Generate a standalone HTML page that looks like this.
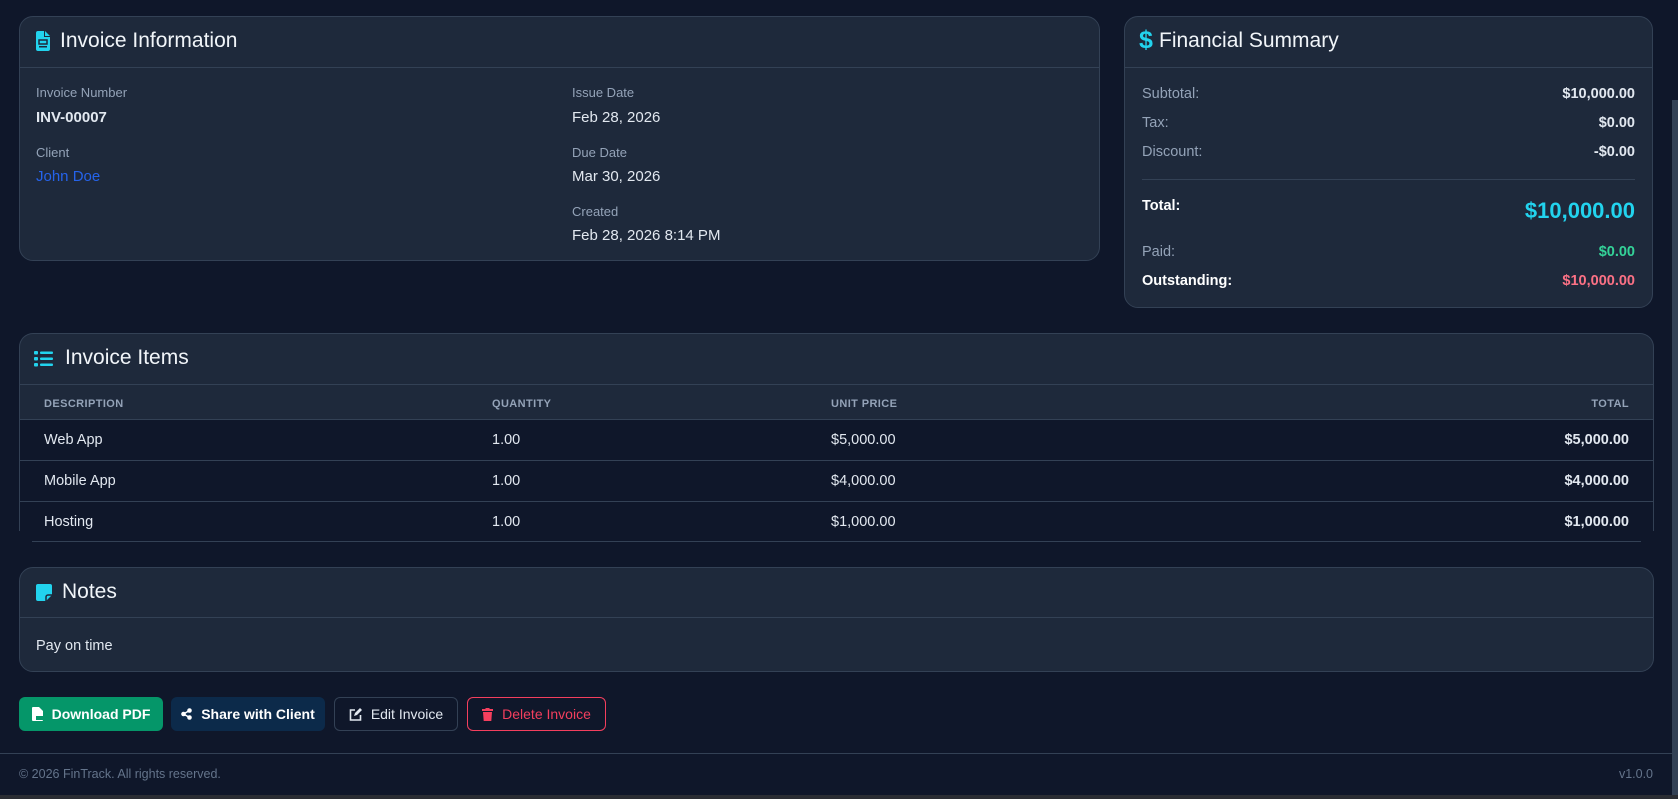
<!DOCTYPE html>
<html><head><meta charset="utf-8">
<style>
*{margin:0;padding:0;box-sizing:border-box}
body{width:1678px;height:799px;background:#0f172a;font-family:"Liberation Sans",sans-serif;color:#e2e8f0;position:relative;overflow:hidden}
.a{position:absolute;white-space:nowrap}
.card{position:absolute;background:#1e293b;border:1px solid #334155;border-radius:14px;overflow:hidden}
.hd{position:absolute;left:0;right:0;top:0;height:51px;border-bottom:1px solid #334155}
.ttl{position:absolute;top:12px;font-size:21px;color:#f1f5f9}
.lbl{font-size:13px;color:#94a3b8}
.val{font-size:15px;color:#e2e8f0}
.th{font-size:11px;font-weight:bold;color:#94a3b8;letter-spacing:.4px}
.td{font-size:14.5px;color:#e2e8f0}
.btn{position:absolute;top:697px;height:34px;border-radius:6px;font-size:14px;font-weight:bold;display:flex;align-items:center;justify-content:center;gap:9px}
</style></head><body>

<!-- Invoice Information -->
<div class="card" style="left:19px;top:16px;width:1081px;height:245px">
  <div class="hd"></div>
  <svg class="a" style="left:16px;top:14px" width="14" height="20" viewBox="0 0 14 20"><path d="M0 2a2 2 0 0 1 2-2h6v6h6v12a2 2 0 0 1-2 2H2a2 2 0 0 1-2-2z M9 0l5 5H9z" fill="#22d3ee"/><rect x="3" y="9" width="8" height="4" fill="none" stroke="#1e293b" stroke-width="1.5"/><rect x="3" y="15" width="8" height="1.5" fill="#1e293b"/></svg>
  <div class="ttl" style="left:40px">Invoice Information</div>
  <div class="a lbl" style="left:16px;top:68px">Invoice Number</div>
  <div class="a val" style="left:16px;top:92px;font-weight:bold">INV-00007</div>
  <div class="a lbl" style="left:16px;top:128px">Client</div>
  <div class="a val" style="left:16px;top:151px;color:#2563eb">John Doe</div>
  <div class="a lbl" style="left:552px;top:68px">Issue Date</div>
  <div class="a val" style="left:552px;top:92px">Feb 28, 2026</div>
  <div class="a lbl" style="left:552px;top:128px">Due Date</div>
  <div class="a val" style="left:552px;top:151px">Mar 30, 2026</div>
  <div class="a lbl" style="left:552px;top:187px">Created</div>
  <div class="a val" style="left:552px;top:210px">Feb 28, 2026 8:14 PM</div>
</div>

<!-- Financial Summary -->
<div class="card" style="left:1124px;top:16px;width:529px;height:292px">
  <div class="hd"></div>
  <div class="a" style="left:14px;top:9px;font-size:25px;font-weight:bold;color:#22d3ee">$</div>
  <div class="ttl" style="left:34px">Financial Summary</div>
  <div class="a" style="left:17px;top:69px;font-size:14.5px;color:#94a3b8">Subtotal:</div>
  <div class="a" style="right:17px;top:69px;font-size:14.5px;font-weight:bold;color:#e2e8f0">$10,000.00</div>
  <div class="a" style="left:17px;top:98px;font-size:14.5px;color:#94a3b8">Tax:</div>
  <div class="a" style="right:17px;top:98px;font-size:14.5px;font-weight:bold">$0.00</div>
  <div class="a" style="left:17px;top:127px;font-size:14.5px;color:#94a3b8">Discount:</div>
  <div class="a" style="right:17px;top:127px;font-size:14.5px;font-weight:bold">-$0.00</div>
  <div class="a" style="left:17px;right:17px;top:162px;height:1px;background:#334155"></div>
  <div class="a" style="left:17px;top:181px;font-size:14.5px;font-weight:bold;color:#fff">Total:</div>
  <div class="a" style="right:17px;top:181px;font-size:22px;font-weight:bold;color:#22d3ee">$10,000.00</div>
  <div class="a" style="left:17px;top:227px;font-size:14.5px;color:#94a3b8">Paid:</div>
  <div class="a" style="right:17px;top:227px;font-size:14.5px;font-weight:bold;color:#34d399">$0.00</div>
  <div class="a" style="left:17px;top:256px;font-size:14.5px;font-weight:bold;color:#fff">Outstanding:</div>
  <div class="a" style="right:17px;top:256px;font-size:14.5px;font-weight:bold;color:#fb7185">$10,000.00</div>
</div>

<!-- Invoice Items -->
<div class="card" style="left:19px;top:333px;width:1635px;height:198px;border-bottom:none;border-radius:14px 14px 0 0">
  <div class="hd"></div>
  <svg class="a" style="left:14px;top:17px" width="19" height="16" viewBox="0 0 19 16"><g fill="#22d3ee"><rect x="0" y="0" width="4" height="3.5" rx="1"/><rect x="0" y="6" width="4" height="3.5" rx="1"/><rect x="0" y="12" width="4" height="3.5" rx="1"/><rect x="6" y="0.5" width="13" height="2.5" rx="1"/><rect x="6" y="6.5" width="13" height="2.5" rx="1"/><rect x="6" y="12.5" width="13" height="2.5" rx="1"/></g></svg>
  <div class="ttl" style="left:45px">Invoice Items</div>
  <div class="a" style="left:0;right:0;top:85px;height:113px;background:#0f172a"></div>
  <div class="a" style="left:0;right:0;top:85px;height:1px;background:#334155"></div>
  <div class="a" style="left:0;right:0;top:126px;height:1px;background:#334155"></div>
  <div class="a" style="left:0;right:0;top:167px;height:1px;background:#334155"></div>
  <div class="a th" style="left:24px;top:64px">DESCRIPTION</div>
  <div class="a th" style="left:472px;top:64px">QUANTITY</div>
  <div class="a th" style="left:811px;top:64px">UNIT PRICE</div>
  <div class="a th" style="right:24px;top:64px">TOTAL</div>
  <div class="a td" style="left:24px;top:98px">Web App</div>
  <div class="a td" style="left:472px;top:98px">1.00</div>
  <div class="a td" style="left:811px;top:98px">$5,000.00</div>
  <div class="a td" style="right:24px;top:98px;font-weight:bold">$5,000.00</div>
  <div class="a td" style="left:24px;top:139px">Mobile App</div>
  <div class="a td" style="left:472px;top:139px">1.00</div>
  <div class="a td" style="left:811px;top:139px">$4,000.00</div>
  <div class="a td" style="right:24px;top:139px;font-weight:bold">$4,000.00</div>
  <div class="a td" style="left:24px;top:180px">Hosting</div>
  <div class="a td" style="left:472px;top:180px">1.00</div>
  <div class="a td" style="left:811px;top:180px">$1,000.00</div>
  <div class="a td" style="right:24px;top:180px;font-weight:bold">$1,000.00</div>
</div>
<div class="a" style="left:32px;width:1609px;top:541px;height:1px;background:#334155"></div>

<!-- Notes -->
<div class="card" style="left:19px;top:567px;width:1635px;height:105px">
  <div class="hd" style="height:50px"></div>
  <svg class="a" style="left:16px;top:16px" width="16" height="17" viewBox="0 0 16 17"><path d="M2 0h12a2 2 0 0 1 2 2v9l-6 6H2a2 2 0 0 1-2-2V2a2 2 0 0 1 2-2z" fill="#22d3ee"/><path d="M10 17v-4a2 2 0 0 1 2-2h4" fill="none" stroke="#1e293b" stroke-width="1.5"/></svg>
  <div class="ttl" style="left:42px">Notes</div>
  <div class="a" style="left:16px;top:70px;font-size:14.5px;color:#e2e8f0">Pay on time</div>
</div>

<!-- Buttons -->
<div class="btn" style="left:19px;width:144px;background:#059669;color:#fff">
  <svg width="11" height="14" viewBox="0 0 11 14"><path d="M0 1a1 1 0 0 1 1-1h6l4 4v9a1 1 0 0 1-1 1H1a1 1 0 0 1-1-1z" fill="#fff"/><rect x="4" y="9" width="7" height="4" fill="#059669"/></svg>Download PDF</div>
<div class="btn" style="left:171px;width:154px;background:#0c2a4a;color:#fff">
  <svg width="11" height="12" viewBox="0 0 11 12"><circle cx="8.5" cy="2.5" r="2.3" fill="#fff"/><circle cx="2.5" cy="6" r="2.3" fill="#fff"/><circle cx="8.5" cy="9.5" r="2.3" fill="#fff"/><path d="M2.5 6L8.5 2.5M2.5 6l6 3.5" stroke="#fff" stroke-width="1.5"/></svg>Share with Client</div>
<div class="btn" style="left:334px;width:124px;border:1px solid #334155;color:#e2e8f0;font-weight:normal">
  <svg width="13" height="13" viewBox="0 0 13 13"><path d="M6 2H1.5v10h10V7" fill="none" stroke="#e2e8f0" stroke-width="1.6"/><path d="M5 8l1-3 5-5 2 2-5 5z" fill="#e2e8f0"/></svg>Edit Invoice</div>
<div class="btn" style="left:467px;width:139px;border:1px solid #f43f5e;color:#f43f5e;font-weight:normal">
  <svg width="11" height="13" viewBox="0 0 11 13"><rect x="0" y="1" width="11" height="2" fill="#f43f5e"/><rect x="3.5" y="0" width="4" height="2" fill="#f43f5e"/><path d="M1 4h9l-.7 9H1.7z" fill="#f43f5e"/></svg>Delete Invoice</div>

<!-- Footer -->
<div class="a" style="left:0;width:1672px;top:753px;height:1px;background:#334155"></div>
<div class="a" style="left:19px;top:767px;font-size:12.5px;color:#64748b">© 2026 FinTrack. All rights reserved.</div>
<div class="a" style="right:25px;top:767px;font-size:12.5px;color:#64748b">v1.0.0</div>
<div class="a" style="left:0;right:0;top:795px;height:4px;background:#2a2d33"></div>
<div class="a" style="left:1672px;width:6px;top:100px;height:695px;background:#334155"></div>
</body></html>
